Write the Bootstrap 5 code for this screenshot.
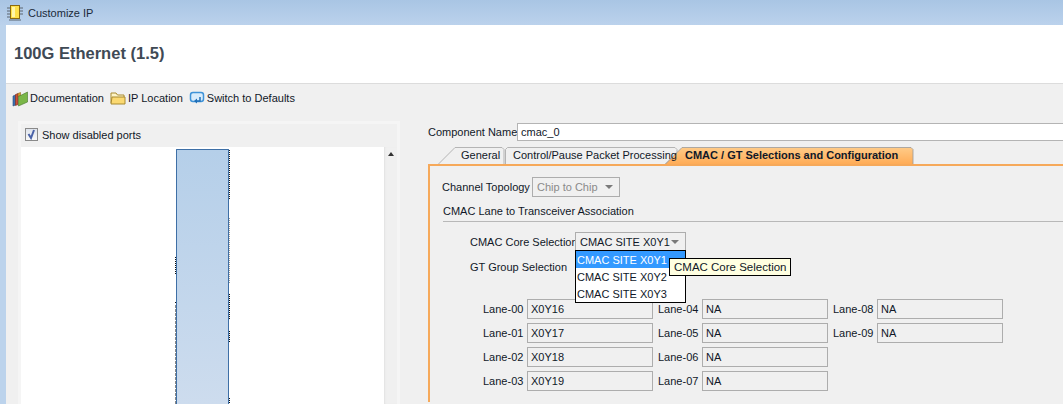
<!DOCTYPE html>
<html lang="en">
<head>
<meta charset="utf-8">
<title>Customize IP</title>
<link href="https://cdn.jsdelivr.net/npm/bootstrap@5.3.0/dist/css/bootstrap.min.css" rel="stylesheet">
<style>
html,body{height:100%;}
body{width:1063px;height:404px;overflow:hidden;background:#bcd3ec;font-family:"Liberation Sans",Arimo,sans-serif;font-size:11px;line-height:14px;color:#101828;}
label,span{white-space:nowrap;}
label{margin:0;}
.win-title{height:25px;padding-left:7px;gap:4px;background:linear-gradient(#a9c5e4,#bbd2ec);color:#1a2a3a;}
.win-body{height:379px;margin-left:6px;background:#f0f0f0;}
.ip-head{height:59px;background:#fff;border-bottom:1px solid #dcdcdc;padding-left:8px;}
.ip-head h1{font-family:"Liberation Sans",sans-serif;font-size:16.5px;font-weight:700;margin:0;color:#3f4a55;}
.tools{height:28px;padding-left:6px;gap:6px;}
.tool{gap:2px;}
.split{height:292px;padding:9px 0 0 12px;}
.ports{width:382px;padding:3px 3px 0;background:#f5f5f5;flex:none;height:100%;}
.ports-top{height:23px;padding:0 0 2px 4px;gap:4px;background:#f0f0f0;}
.chk{width:13px;height:13px;border:1px solid #8a8a8a;background:linear-gradient(#dfe4ec,#f8f8f8);display:block;}
.canvas-row{flex:1;min-height:0;}
.canvas{width:363px;background:#fff;position:relative;padding-top:2px;}
.sym{display:block;width:53px;height:100%;margin-left:155px;background:linear-gradient(#b5cfe9,#cddcee);border:1px solid #3e6fa6;border-bottom:0;border-radius:1px 1px 0 0;}
.pins{position:absolute;left:153px;top:0;}
.sbar{width:13px;background:#f0f0f0;padding-top:5px;box-shadow:inset 2px 0 2px -1px #e2e2e2;}
.sbar i{display:block;margin:0 auto;width:0;height:0;border:3.5px solid transparent;border-top:0;border-bottom:4px solid #333;}
.conf{margin-left:28px;flex:1;min-width:0;}
.name-row{height:18px;margin-top:2px;}
.name-row label{width:89px;}
.name-in{flex:1;height:18px;background:#fff;border:1px solid #b4b4b4;border-right:0;padding:0 3px;display:flex;align-items:center;}
.tabs-row{height:20px;margin-top:4px;padding-left:10px;}
.tabx{position:relative;height:20px;display:flex;align-items:center;}
.tabx svg{position:absolute;left:0;top:0;}
.tabx span{position:relative;z-index:2;}
.tab-a{width:67px;}.tab-a span{margin-left:23px;}
.tab-b{width:160px;}.tab-b span{margin-left:8px;}
.tab-c{width:250px;}.tab-c span{margin-left:20px;font-weight:700;}
.panel{position:relative;height:238px;border-top:2px solid #f6a95a;border-left:2px solid #f6a95a;background:#f0f0f0;padding:11px 0 0 12px;margin-top:-1px;}
.f-row{height:20px;}
.lbl-topo{width:90px;}
.combo{border:1px solid #adadad;height:20px;padding:0 4px;display:flex;align-items:center;justify-content:space-between;background:#f0f0f0;}
.combo i{width:0;height:0;border:4px solid transparent;border-bottom:0;border-top:4px solid #7a7a7a;display:block;margin-right:2px;}
.combo-off{width:88px;color:#8a8a8a;}
.combo-on{width:111px;}
.sect{height:18px;margin-top:7px;border-bottom:1px solid #b8b8b8;margin-left:1px;}
.core{padding-left:28px;margin-top:10px;}
.lbl-core{width:105px;}
.gt{padding-left:28px;margin-top:5px;height:20px;}
.lanes{display:grid;grid-template-columns:repeat(3,175px);grid-auto-rows:20px;row-gap:4px;margin:22px 0 0 41px;}
.lane{display:flex;align-items:center;}
.lane label{width:44px;padding-bottom:1px;}
.lane div{width:126px;height:20px;border:1px solid #adadad;padding:0 3px 1px;display:flex;align-items:center;}
.ddmenu{position:absolute;left:145px;top:84px;width:111px;height:53px;background:#fff;border:1px solid #000;z-index:2;}
.ddmenu div{height:17px;padding-left:1px;display:flex;align-items:center;}
.ddmenu .on{background:#3399ff;color:#fff;}
.tip{position:absolute;left:239px;top:92px;width:122px;height:18px;background:#ffffe1;border:1px solid #000;z-index:3;padding-left:4px;display:flex;align-items:center;font-size:11.5px;white-space:nowrap;}
</style>
</head>
<body>
<div class="win-title d-flex align-items-center">
  <svg width="17" height="17" viewBox="0 0 17 17"><path d="M0 4h3M0 7h3M0 10h3M0 13h3M13 4h3M13 7h3M13 10h3M2 16h12" stroke="#5a6470" fill="none"/><rect x="3.500" y="1.500" width="9" height="13" fill="#ffe14a" stroke="#8a6a10"/><rect x="5" y="3" width="3" height="10" fill="#fff6a8"/></svg>
  <span>Customize IP</span>
</div>
<div class="win-body">
  <div class="ip-head d-flex align-items-center"><h1>100G Ethernet (1.5)</h1></div>
  <div class="tools d-flex align-items-center">
    <div class="tool d-flex align-items-center">
      <svg width="16" height="17" viewBox="0 0 16 17"><path d="M1 6l2.500-1v10L1 16z" fill="#3c6fb0" stroke="#254a7a" stroke-width=".6"/><path d="M3.500 4.500L6 3.500v11l-2.500 1z" fill="#c8503a" stroke="#7a2a1c" stroke-width=".6"/><path d="M6 3.500L8.500 2.500v3L6 6.500z" fill="#e0a030" stroke="#8a6418" stroke-width=".6"/><path d="M6.500 6.500L15.500 2v10L6.500 16z" fill="#7ab648" stroke="#44752a" stroke-width=".6"/></svg>
      <span>Documentation</span>
    </div>
    <div class="tool d-flex align-items-center">
      <svg width="16" height="14" viewBox="0 0 16 14"><path d="M1 12V2h5l1.500 2H14v2" fill="#fdf4c8" stroke="#a88a30"/><path d="M1 13l1-7h13v7z" fill="#fbd971" stroke="#a88a30"/></svg>
      <span>IP Location</span>
    </div>
    <div class="tool d-flex align-items-center">
      <svg width="16" height="16" viewBox="0 0 16 16"><rect x="1.500" y="2.500" width="13" height="9" rx="2.500" fill="#d9ecfb" stroke="#3f93d8" stroke-width="1.500"/><path d="M11 7v4H7" fill="none" stroke="#1f6fb8" stroke-width="1.500"/><path d="M8 8.500v5l-3-2.500z" fill="#1f6fb8"/></svg>
      <span>Switch to Defaults</span>
    </div>
  </div>
  <div class="split d-flex">
    <div class="ports d-flex flex-column">
      <div class="ports-top d-flex align-items-center">
        <svg class="chk" viewBox="0 0 11 11"><path d="M2.500 5l2.500 4 3-8" fill="none" stroke="#4a62a8" stroke-width="2"/></svg>
        <span>Show disabled ports</span>
      </div>
      <div class="canvas-row d-flex">
        <div class="canvas">
          <span class="sym"></span>
          <svg class="pins" width="58" height="257" viewBox="0 0 58 257" fill="none" stroke-width="1" stroke-dasharray="1 1">
            <path d="M55.500 3v50" stroke="#222"/><path d="M55.500 71v66" stroke="#999"/><path d="M55.500 147v26M55.500 184v12M55.500 251v6" stroke="#111"/>
            <path d="M1.500 110v18M1.500 155v2" stroke="#111"/><path d="M1.500 158v99" stroke="#888" stroke-dasharray="3 1"/>
          </svg>
        </div>
        <div class="sbar"><i></i></div>
      </div>
    </div>
    <div class="conf">
      <div class="name-row d-flex align-items-center"><label>Component Name</label><div class="name-in">cmac_0</div></div>
      <div class="tabs-row d-flex">
        <div class="tabx tab-a"><svg width="67" height="20"><path d="M0 19.500L17 2.500H64l2 2v15" fill="#f0f0f0" stroke="#b4b4b4"/></svg><span>General</span></div>
        <div class="tabx tab-b"><svg width="175" height="20"><path d="M.5 19.500V4.500l2-2H170l2 2V8L160 19.500z" fill="#f0f0f0" stroke="#b4b4b4"/></svg><span>Control/Pause Packet Processing</span></div>
        <div class="tabx tab-c"><svg width="250" height="20"><defs><linearGradient id="og" x1="0" y1="0" x2="0" y2="1"><stop offset="0" stop-color="#ffcb88"/><stop offset="1" stop-color="#ffab55"/></linearGradient></defs><path d="M0 19.500L17 2.500H246l2 2v15z" fill="url(#og)" stroke="#9a9a9a" stroke-width=".8"/></svg><span>CMAC / GT Selections and Configuration</span></div>
      </div>
      <div class="panel">
        <div class="f-row d-flex align-items-center"><span class="lbl-topo">Channel Topology</span><div class="combo combo-off"><span>Chip to Chip</span><i></i></div></div>
        <div class="sect">CMAC Lane to Transceiver Association</div>
        <div class="core f-row d-flex align-items-center"><span class="lbl-core">CMAC Core Selection</span><div class="combo combo-on"><span>CMAC SITE X0Y1</span><i></i></div></div>
        <div class="gt d-flex align-items-center"><span>GT Group Selection</span></div>
        <div class="lanes">
          <div class="lane"><label>Lane-00</label><div>X0Y16</div></div>
          <div class="lane"><label>Lane-04</label><div>NA</div></div>
          <div class="lane"><label>Lane-08</label><div>NA</div></div>
          <div class="lane"><label>Lane-01</label><div>X0Y17</div></div>
          <div class="lane"><label>Lane-05</label><div>NA</div></div>
          <div class="lane"><label>Lane-09</label><div>NA</div></div>
          <div class="lane"><label>Lane-02</label><div>X0Y18</div></div>
          <div class="lane"><label>Lane-06</label><div>NA</div></div>
          <span></span>
          <div class="lane"><label>Lane-03</label><div>X0Y19</div></div>
          <div class="lane"><label>Lane-07</label><div>NA</div></div>
        </div>
        <div class="ddmenu"><div class="on">CMAC SITE X0Y1</div><div>CMAC SITE X0Y2</div><div>CMAC SITE X0Y3</div></div>
        <div class="tip">CMAC Core Selection</div>
      </div>
    </div>
  </div>
</div>
<script src="https://cdn.jsdelivr.net/npm/bootstrap@5.3.0/dist/js/bootstrap.bundle.min.js"></script>
</body>
</html>
